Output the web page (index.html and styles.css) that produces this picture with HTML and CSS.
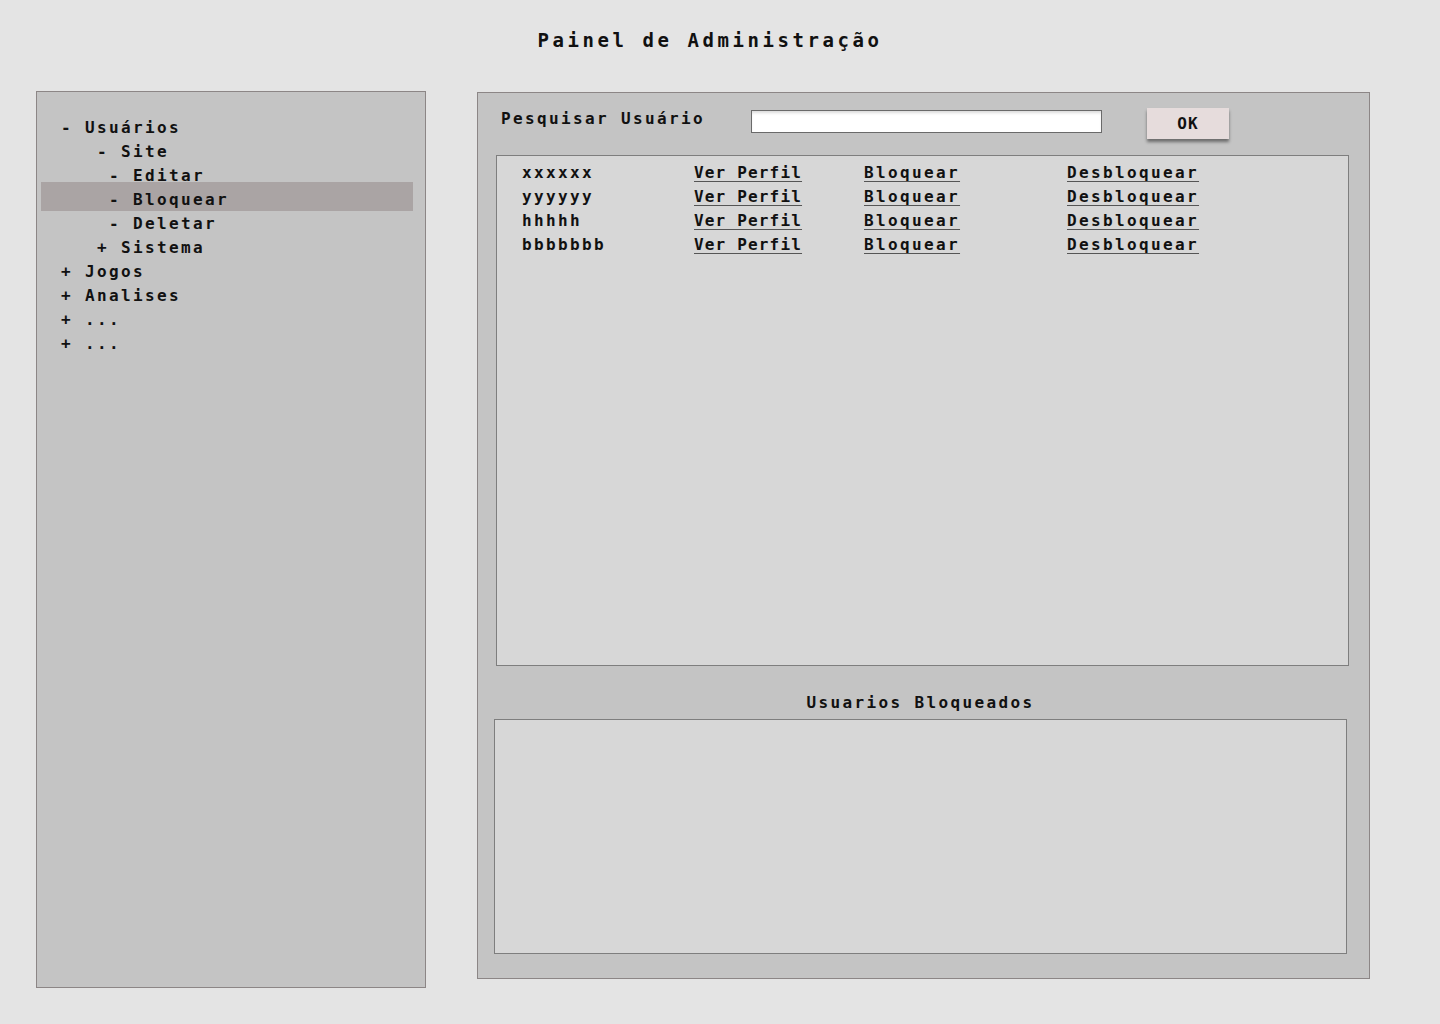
FILE: index.html
```html
<!DOCTYPE html>
<html lang="pt">
<head>
<meta charset="utf-8">
<title>Painel de Administração</title>
<link rel="stylesheet" href="styles.css">
</head>
<body>
<header class="top">
  <h1 class="title">Painel de Administração</h1>
</header>
<main class="layout">
  <nav class="side">
    <ul class="tree">
      <li class="node lvl0">- Usuários</li>
      <li class="node lvl1">- Site</li>
      <li class="node lvl2">- Editar</li>
      <li class="node lvl2 active">- Bloquear</li>
      <li class="node lvl2">- Deletar</li>
      <li class="node lvl1">+ Sistema</li>
      <li class="node lvl0">+ Jogos</li>
      <li class="node lvl0">+ Analises</li>
      <li class="node lvl0">+ ...</li>
      <li class="node lvl0">+ ...</li>
    </ul>
  </nav>
  <section class="content">
    <div class="search">
      <label class="search-label" for="q">Pesquisar Usuário</label>
      <input class="search-input" id="q" type="text">
      <button class="ok" type="button">OK</button>
    </div>
    <div class="list">
      <div class="row"><span class="name">xxxxxx</span><a class="act c1" href="#">Ver Perfil</a><a class="act c2" href="#">Bloquear</a><a class="act c3" href="#">Desbloquear</a></div>
      <div class="row"><span class="name">yyyyyy</span><a class="act c1" href="#">Ver Perfil</a><a class="act c2" href="#">Bloquear</a><a class="act c3" href="#">Desbloquear</a></div>
      <div class="row"><span class="name">hhhhh</span><a class="act c1" href="#">Ver Perfil</a><a class="act c2" href="#">Bloquear</a><a class="act c3" href="#">Desbloquear</a></div>
      <div class="row"><span class="name">bbbbbbb</span><a class="act c1" href="#">Ver Perfil</a><a class="act c2" href="#">Bloquear</a><a class="act c3" href="#">Desbloquear</a></div>
    </div>
    <h2 class="blocked-title">Usuarios Bloqueados</h2>
    <div class="blocked"></div>
  </section>
</main>
</body>
</html>
```
FILE: styles.css
```css
* { box-sizing: border-box; }

html, body {
  margin: 0;
  padding: 0;
  background: #e4e4e4;
  color: #111;
  font-family: "DejaVu Sans Mono", "Liberation Mono", monospace;
  font-weight: bold;
  font-size: 16px;
  letter-spacing: 2.37px;
}

.top {
  padding-top: 28px;
  height: 91px;
}

.title {
  margin: 0 20px 0 0;
  text-align: center;
  font-size: 19px;
  line-height: 24px;
  letter-spacing: 3.56px;
  font-weight: bold;
}

.layout {
  display: flex;
  align-items: flex-start;
  padding-left: 36px;
  gap: 51px;
}

.side {
  width: 390px;
  height: 897px;
  background: #c4c4c4;
  border: 1px solid #8c8686;
  padding-top: 24px;
}

.tree {
  list-style: none;
  margin: 0;
  padding: 0;
}

.node {
  line-height: 24px;
  height: 24px;
  white-space: pre;
}

.lvl0 { padding-left: 24px; }
.lvl1 { padding-left: 60px; }
.lvl2 { padding-left: 72px; }

.node.active {
  background: #aaa4a4;
  margin: -6px 12px 0 4px;
  padding-top: 6px;
  padding-left: 68px;
  height: 29px;
  margin-bottom: 1px;
}

.content {
  width: 893px;
  height: 887px;
  margin-top: 1px;
  background: #c4c4c4;
  border: 1px solid #8c8686;
  padding-top: 14px;
  display: flex;
  flex-direction: column;
}

.search {
  display: flex;
  align-items: flex-start;
  height: 32px;
  padding-left: 23px;
}

.search-label {
  line-height: 24px;
  width: 250px;
}

.search-input {
  margin-top: 3px;
  width: 351px;
  height: 23px;
  background: #fff;
  border: 1px solid #6a6a6a;
  box-shadow: inset 0 3px 3px -1px rgba(0, 0, 0, 0.14);
  padding: 0 4px;
  font: inherit;
}

.ok {
  margin-top: 1px;
  margin-left: 45px;
  width: 82px;
  height: 31px;
  background: #e6dcdc;
  border: none;
  box-shadow: 0 3px 3px rgba(0, 0, 0, 0.45);
  font-family: inherit;
  font-weight: bold;
  font-size: 16px;
  letter-spacing: 1px;
  color: #111;
  padding: 0;
}

.list {
  margin: 16px 20px 0 18px;
  height: 511px;
  background: #d7d7d7;
  border: 1px solid #7e7e7e;
  padding: 5px 0 0 25px;
}

.row {
  display: grid;
  grid-template-columns: 172px 170px 203px auto;
  line-height: 24px;
  height: 24px;
}

.act {
  color: #111;
  text-decoration: underline;
  text-decoration-thickness: 1px;
  text-underline-offset: 3px;
  text-decoration-color: #555;
  justify-self: start;
}

.act.c1 {
  letter-spacing: 1.17px;
}

.blocked-title {
  margin: 25px 0 4px 16px;
  width: 853px;
  text-align: center;
  font-size: 16px;
  line-height: 24px;
  letter-spacing: 2.37px;
  font-weight: bold;
}

.blocked {
  margin-left: 16px;
  width: 853px;
  height: 235px;
  background: #d7d7d7;
  border: 1px solid #7e7e7e;
}
```
